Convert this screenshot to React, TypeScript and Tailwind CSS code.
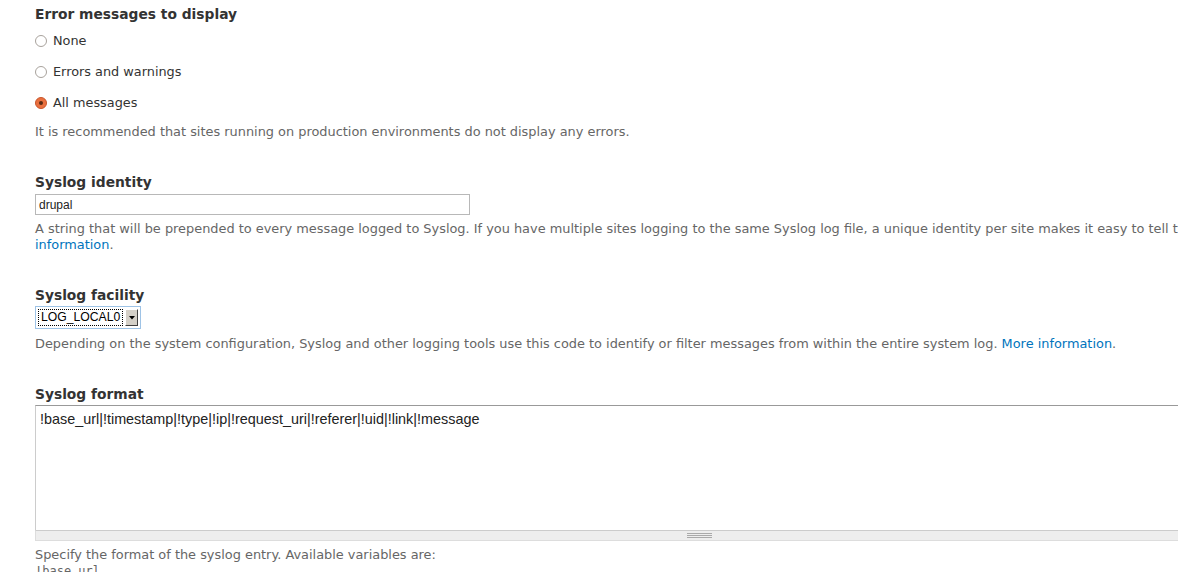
import React from "react";

const font = { fontFamily: '"DejaVu Sans", Verdana, sans-serif' };

function Radio({ checked, label }: { checked?: boolean; label: string }) {
  return (
    <div className="flex items-center h-[31px]">
      {checked ? (
        <span className="w-[12px] h-[12px] rounded-full bg-[#e9703f] border border-[#c9552a] flex items-center justify-center">
          <span className="w-[4px] h-[4px] rounded-full bg-[#5a2a14]" />
        </span>
      ) : (
        <span className="w-[12px] h-[12px] rounded-full border border-[#a8a29c] bg-white" />
      )}
      <span className="ml-[6px] text-[12.85px] text-[#333]">{label}</span>
    </div>
  );
}

export default function App() {
  return (
    <div className="w-[1178px] h-[572px] overflow-hidden bg-white" style={font}>
      <div className="w-[1400px] pl-[35px]">
        <div className="text-[13.8px] font-bold text-[#333] leading-[18px] pt-[5px]">Error messages to display</div>
        <div className="mt-[2px]">
          <Radio label="None" />
          <Radio label="Errors and warnings" />
          <Radio checked label="All messages" />
        </div>
        <div className="text-[12.9px] text-[#666] leading-[16px] mt-[6px]">
          It is recommended that sites running on production environments do not display any errors.
        </div>

        <div className="text-[13.8px] font-bold text-[#333] leading-[18px] mt-[33px]">Syslog identity</div>
        <div className="mt-[3px] w-[435px] h-[21px] border border-[#b8b8b8] bg-white flex items-center px-[3px]">
          <span className="text-[12px] text-[#222]" style={{ fontFamily: '"Liberation Sans", Arial, sans-serif' }}>drupal</span>
        </div>
        <div className="text-[12.9px] text-[#666] leading-[16px] mt-[6px] whitespace-nowrap">
          A string that will be prepended to every message logged to Syslog. If you have multiple sites logging to the same Syslog log file, a unique identity per site makes it easy to tell the log entries apart.{" "}
          <span className="text-[#0074bd]">More</span>
          <br />
          <span className="text-[#0074bd]">information</span>.
        </div>

        <div className="text-[13.8px] font-bold text-[#333] leading-[18px] mt-[33px]">Syslog facility</div>
        <div className="mt-[2px] w-[106px] h-[23px] border border-[#9ec3e6] bg-white flex items-center pl-[2px] pr-[2px]">
          <div className="flex-1 h-[17px] border border-dotted border-black flex items-center pl-[2px]">
            <span className="text-[12.2px] text-black leading-none" style={{ fontFamily: '"Liberation Sans", Arial, sans-serif' }}>LOG_LOCAL0</span>
          </div>
          <div className="ml-[2px] w-[13px] h-[17px] bg-[#d4d0c8] border-t border-l border-t-white border-l-white border-r border-b border-r-[#404040] border-b-[#404040] flex items-center justify-center">
            <svg width="6" height="4" viewBox="0 0 6 4"><path d="M0 0h6L3 3.5z" fill="#000" /></svg>
          </div>
        </div>
        <div className="text-[12.9px] text-[#666] leading-[16px] mt-[7px] whitespace-nowrap">
          Depending on the system configuration, Syslog and other logging tools use this code to identify or filter messages from within the entire system log.{" "}
          <span className="text-[#0074bd]">More information</span>.
        </div>

        <div className="text-[13.8px] font-bold text-[#333] leading-[18px] mt-[33px]">Syslog format</div>
        <div className="mt-[2px] w-[1200px] border-t border-t-[#999] border-l border-l-[#ccc] h-[125px] bg-white px-[4px] pt-[1px]">
          <span className="text-[14.4px] text-[#222]" style={{ fontFamily: '"Liberation Sans", Arial, sans-serif' }}>
            !base_url|!timestamp|!type|!ip|!request_uri|!referer|!uid|!link|!message
          </span>
        </div>
        <div className="w-[1200px] h-[11px] bg-[#eee] border-t border-t-[#ccc] border-b border-b-[#ddd] border-l border-l-[#ddd] relative">
          <div className="absolute left-[651px] top-[2px] w-[25px] flex flex-col gap-[1px]">
            <div className="h-[1px] bg-[#aaa]" />
            <div className="h-[1px] bg-[#aaa]" />
            <div className="h-[1px] bg-[#aaa]" />
          </div>
        </div>
        <div className="text-[12.9px] text-[#666] leading-[16px] mt-[6px]">
          Specify the format of the syslog entry. Available variables are:
        </div>
        <div className="text-[12px] text-[#666] leading-[16px]" style={{ fontFamily: '"DejaVu Sans Mono", monospace' }}>!base_url</div>
      </div>
    </div>
  );
}
